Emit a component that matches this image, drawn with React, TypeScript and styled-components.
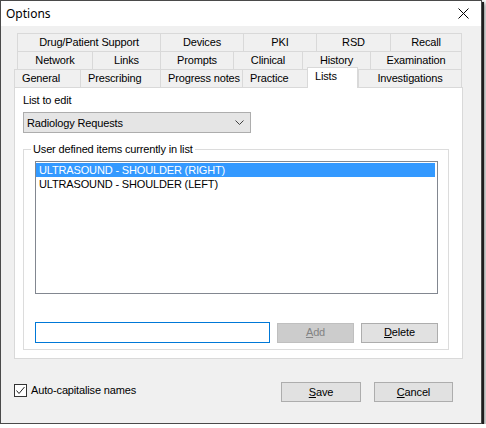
import React, { useState } from 'react'
import styled, { createGlobalStyle } from 'styled-components'

const GlobalStyle = createGlobalStyle`
  html, body {
    margin: 0;
    padding: 0;
    background: #ffffff;
  }
  * {
    box-sizing: border-box;
  }
`

const Window = styled.div`
  width: 482px;
  height: 424px;
  border: 1px solid #4a4a4a;
  box-shadow: 2px 2px 0 #1e1e1e, 3px 3px 4px rgba(0, 0, 0, 0.55);
  background: #f0f0f0;
  display: flex;
  flex-direction: column;
  font-family: 'Liberation Sans', Arial, sans-serif;
  font-size: 11px;
  letter-spacing: -0.15px;
  color: #000;
`

const TitleBar = styled.div`
  height: 25px;
  background: #ffffff;
  display: flex;
  align-items: center;
  justify-content: space-between;
  padding: 0 12px 0 5px;
  font-family: 'Noto Sans', 'Open Sans', sans-serif;
  font-size: 12px;
  letter-spacing: 0;
`

const Body = styled.div`
  flex: 1;
  padding: 7px 17px 0 13px;
  display: flex;
  flex-direction: column;
`

const TabRow = styled.div<{ $indent: number }>`
  display: flex;
  height: 18px;
  padding-left: ${(p) => p.$indent}px;
`

const Tab = styled.div<{ $w: number; $last?: boolean; $left?: boolean }>`
  width: ${(p) => p.$w}px;
  height: 18px;
  border-top: 1px solid #d9d9d9;
  border-left: 1px solid #d9d9d9;
  border-right: ${(p) => (p.$last ? '1px solid #d9d9d9' : 'none')};
  display: flex;
  align-items: center;
  justify-content: ${(p) => (p.$left ? 'flex-start' : 'center')};
  padding-left: ${(p) => (p.$left ? 7 : 0)}px;
  white-space: nowrap;
  line-height: 13px;
`

const ActiveTab = styled.div<{ $w: number }>`
  position: relative;
  z-index: 1;
  width: ${(p) => p.$w}px;
  height: 21px;
  margin-top: -2px;
  background: #ffffff;
  border: 1px solid #d9d9d9;
  border-bottom: none;
  padding: 2px 0 0 7px;
  line-height: 13px;
`

const Panel = styled.div`
  width: 449px;
  height: 272px;
  border: 1px solid #d9d9d9;
  background: #ffffff;
  padding: 6px 14px 0 8px;
  display: flex;
  flex-direction: column;
`

const Label = styled.div`
  line-height: 13px;
  height: 13px;
`

const Combo = styled.div`
  margin-top: 5px;
  width: 228px;
  height: 21px;
  background: #e5e5e5;
  border: 1px solid #adadad;
  display: flex;
  align-items: center;
  justify-content: space-between;
  padding: 0 6px 0 3px;
`

const Group = styled.fieldset`
  margin: 10px 0 0 0;
  width: 426px;
  border: 1px solid #dcdcdc;
  padding: 5px 10px 6px 11px;
  min-width: 0;
`

const GroupCaption = styled.legend`
  margin-left: -4px;
  padding: 0 2px;
  line-height: 13px;
  font-size: 11px;
`

const ListBox = styled.div`
  height: 133px;
  border: 1px solid #828790;
  background: #ffffff;
  padding: 1px 2px 0 0;
`

const ListItem = styled.div<{ $selected?: boolean }>`
  height: 14px;
  line-height: 14px;
  padding-left: 3px;
  background: ${(p) => (p.$selected ? '#3399ff' : 'transparent')};
  color: ${(p) => (p.$selected ? '#ffffff' : '#000000')};
`

const EditRow = styled.div`
  margin-top: 28px;
  display: flex;
  align-items: center;
`

const TextInput = styled.input`
  width: 235px;
  height: 21px;
  border: 1px solid #0078d7;
  outline: none;
  padding: 0 3px;
  font: inherit;
  background: #ffffff;
`

const Button = styled.button<{ $w: number; $gap: number; $disabled?: boolean }>`
  width: ${(p) => p.$w}px;
  height: 20px;
  margin-left: ${(p) => p.$gap}px;
  padding: 0;
  font: inherit;
  letter-spacing: inherit;
  background: ${(p) => (p.$disabled ? '#cccccc' : '#e1e1e1')};
  border: 1px solid ${(p) => (p.$disabled ? '#bfbfbf' : '#adadad')};
  color: ${(p) => (p.$disabled ? '#838383' : '#000000')};
  line-height: 13px;
`

const Footer = styled.div`
  margin-top: 23px;
  padding-right: 11px;
  display: flex;
  align-items: flex-start;
  height: 20px;
`

const CheckLabel = styled.label`
  display: flex;
  align-items: center;
  gap: 4px;
  margin-top: 2px;
  line-height: 13px;
  flex: 1;
`

const CheckBox = styled.span`
  width: 13px;
  height: 13px;
  border: 1px solid #333333;
  background: #ffffff;
  display: flex;
  align-items: center;
  justify-content: center;
`

const tabRows = [
  {
    indent: 3,
    tabs: [
      ['Drug/Patient Support', 143],
      ['Devices', 83],
      ['PKI', 73],
      ['RSD', 74],
      ['Recall', 72],
    ],
  },
  {
    indent: 3,
    tabs: [
      ['Network', 75],
      ['Links', 68],
      ['Prompts', 73],
      ['Clinical', 69],
      ['History', 68],
      ['Examination', 92],
    ],
  },
] as const

const App = () => {
  const [items] = useState([
    'ULTRASOUND - SHOULDER (RIGHT)',
    'ULTRASOUND - SHOULDER (LEFT)',
  ])
  return (
    <>
      <GlobalStyle />
      <Window>
        <TitleBar>
          <span>Options</span>
          <svg width="11" height="11" viewBox="0 0 11 11">
            <path d="M0.5 0.5 L10.5 10.5 M10.5 0.5 L0.5 10.5" stroke="#000" strokeWidth="1" />
          </svg>
        </TitleBar>
        <Body>
          {tabRows.map((row, i) => (
            <TabRow key={i} $indent={row.indent}>
              {row.tabs.map(([name, w], j) => (
                <Tab key={name} $w={w} $last={j === row.tabs.length - 1}>
                  {name}
                </Tab>
              ))}
            </TabRow>
          ))}
          <TabRow $indent={0}>
            <Tab $w={66} $left>General</Tab>
            <Tab $w={80} $left>Prescribing</Tab>
            <Tab $w={82} $left>Progress notes</Tab>
            <Tab $w={65} $left>Practice</Tab>
            <ActiveTab $w={51}>Lists</ActiveTab>
            <Tab $w={104} $last>Investigations</Tab>
          </TabRow>
          <Panel>
            <Label>List to edit</Label>
            <Combo>
              <span>Radiology Requests</span>
              <svg width="9" height="6" viewBox="0 0 9 6">
                <path d="M0.5 0.5 L4.5 4.5 L8.5 0.5" stroke="#404040" strokeWidth="1" fill="none" />
              </svg>
            </Combo>
            <Group>
              <GroupCaption>User defined items currently in list</GroupCaption>
              <ListBox>
                {items.map((it, i) => (
                  <ListItem key={it} $selected={i === 0}>
                    {it}
                  </ListItem>
                ))}
              </ListBox>
              <EditRow>
                <TextInput />
                <Button $w={77} $gap={7} $disabled>
                  <u>A</u>dd
                </Button>
                <Button $w={77} $gap={7}>
                  <u>D</u>elete
                </Button>
              </EditRow>
            </Group>
          </Panel>
          <Footer>
            <CheckLabel>
              <CheckBox>
                <svg width="11" height="11" viewBox="0 0 11 11">
                  <path d="M1.5 5.5 L4 8.5 L9.5 2" stroke="#222" strokeWidth="1" fill="none" />
                </svg>
              </CheckBox>
              Auto-capitalise names
            </CheckLabel>
            <Button $w={80} $gap={0}>
              <u>S</u>ave
            </Button>
            <Button $w={79} $gap={13}>
              <u>C</u>ancel
            </Button>
          </Footer>
        </Body>
      </Window>
    </>
  )
}

export default App
